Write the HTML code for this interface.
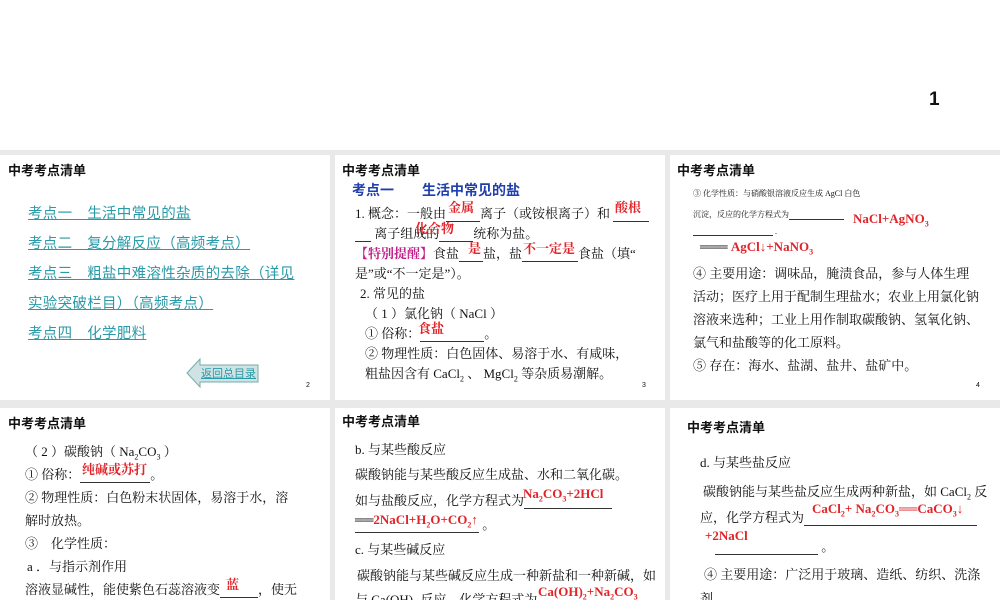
<!DOCTYPE html>
<html><head><meta charset="utf-8"><style>
*{margin:0;padding:0;box-sizing:border-box}
body{width:1000px;height:600px;overflow:hidden;background:#fff;position:relative;font-family:"Liberation Serif","Noto Serif CJK SC","Noto Sans CJK SC",serif;color:#111}
.bg{position:absolute;left:0;top:150px;width:1000px;height:450px;background:#e9e9e9}
.s{position:absolute;background:#fff;overflow:hidden}
.t{position:absolute;font-family:"Liberation Sans","Noto Sans CJK SC",sans-serif;font-weight:bold;font-size:13px;white-space:nowrap}
.p{position:absolute;font-size:13px;white-space:nowrap;font-family:"Liberation Serif","Noto Serif CJK SC",serif}
.r{color:#e0242a;font-weight:bold}
.u{display:inline-block;border-bottom:1px solid #333;vertical-align:bottom}
.lk{position:absolute;color:#2a9aa8;text-decoration:underline;font-size:14.5px;letter-spacing:0.3px;font-family:"Liberation Sans","Noto Sans CJK SC",sans-serif;white-space:nowrap}
.n{position:absolute;font-size:7px;font-family:"Liberation Sans",sans-serif}
sub{font-size:8px}
</style></head><body>
<div style="position:absolute;left:929px;top:89px;font:bold 19px 'Liberation Sans',sans-serif">1</div>
<div class="bg"></div>

<div class="s" style="left:0;top:155px;width:330px;height:245px">
<div class="t" style="left:8px;top:5px">中考考点清单</div>
<div class="lk" style="left:28px;top:47px">考点一　生活中常见的盐</div>
<div class="lk" style="left:28px;top:77px">考点二　复分解反应（高频考点）</div>
<div class="lk" style="left:28px;top:107px">考点三　粗盐中难溶性杂质的去除（详见</div>
<div class="lk" style="left:28px;top:137px">实验突破栏目）（高频考点）</div>
<div class="lk" style="left:28px;top:167px">考点四　化学肥料</div>
<svg style="position:absolute;left:186px;top:203px" width="74" height="30"><polygon points="1,15 14,1 14,7 72,7 72,24 14,24 14,29" fill="#cfe3e5" stroke="#7aa" stroke-width="1"/></svg>
<div class="lk" style="left:201px;top:210px;font-size:11px;letter-spacing:0">返回总目录</div>
<div class="n" style="left:306px;top:227px">2</div>
</div>

<div class="s" style="left:335px;top:155px;width:330px;height:245px">
<div class="t" style="left:7px;top:5px">中考考点清单</div>
<div class="p" style="left:17px;top:25px;color:#1f3fae;font-weight:bold;font-size:14px;font-family:'Liberation Sans','Noto Sans CJK SC',sans-serif">考点一　　生活中常见的盐</div>
<div class="p" style="left:20px;top:48px">1. 概念：一般由<span class="u" style="width:34px"></span>离子（或铵根离子）和 <span class="u" style="width:36px"></span></div>
<div class="p r" style="left:113px;top:42px">金属</div><div class="p r" style="left:280px;top:42px">酸根</div>
<div class="p" style="left:20px;top:68px"><span class="u" style="width:16px"></span> 离子组成的<span class="u" style="width:34px"></span>统称为盐。</div>
<div class="p r" style="left:80px;top:63px">化合物</div>
<div class="p" style="left:20px;top:88px"><span style="color:#c0208a;font-weight:bold">【特别提醒】</span>食盐<span class="u" style="width:24px"></span>盐，盐<span class="u" style="width:56px"></span>食盐（填“</div>
<div class="p r" style="left:133px;top:83px">是</div><div class="p r" style="left:188px;top:83px">不一定是</div>
<div class="p" style="left:20px;top:108px">是”或“不一定是”）。</div>
<div class="p" style="left:25px;top:128px">2. 常见的盐</div>
<div class="p" style="left:30px;top:148px">（ 1 ）氯化钠（ NaCl ）</div>
<div class="p" style="left:30px;top:168px">① 俗称：<span class="u" style="width:64px"></span>。</div>
<div class="p r" style="left:83px;top:163px">食盐</div>
<div class="p" style="left:30px;top:188px">② 物理性质：白色固体、易溶于水、有咸味，</div>
<div class="p" style="left:30px;top:208px">粗盐因含有 CaCl<sub>2</sub> 、 MgCl<sub>2</sub> 等杂质易潮解。</div>
<div class="n" style="left:307px;top:227px">3</div>
</div>

<div class="s" style="left:670px;top:155px;width:330px;height:245px">
<div class="t" style="left:7px;top:5px">中考考点清单</div>
<div class="p" style="left:23px;top:33px;font-size:8px">③ 化学性质：与硝酸银溶液反应生成 AgCl 白色</div>
<div class="p" style="left:23px;top:54px;font-size:8px">沉淀，反应的化学方程式为<span class="u" style="width:55px"></span></div>
<div class="p r" style="left:183px;top:56px;font-size:13px">NaCl+AgNO<sub>3</sub></div>
<div class="p" style="left:23px;top:72px;font-size:8px"><span class="u" style="width:80px"></span> .</div>
<div class="p" style="left:30px;top:84px;font-size:13px">═══ <span class="r">AgCl↓+NaNO<sub>3</sub></span></div>
<div class="p" style="left:23px;top:108px">④ 主要用途：调味品，腌渍食品，参与人体生理</div>
<div class="p" style="left:23px;top:131px">活动；医疗上用于配制生理盐水；农业上用氯化钠</div>
<div class="p" style="left:23px;top:154px">溶液来选种；工业上用作制取碳酸钠、氢氧化钠、</div>
<div class="p" style="left:23px;top:177px">氯气和盐酸等的化工原料。</div>
<div class="p" style="left:23px;top:200px">⑤ 存在：海水、盐湖、盐井、盐矿中。</div>
<div class="n" style="left:306px;top:227px">4</div>
</div>

<div class="s" style="left:0;top:408px;width:330px;height:192px">
<div class="t" style="left:8px;top:5px">中考考点清单</div>
<div class="p" style="left:25px;top:33px">（ 2 ）碳酸钠（ Na<sub>2</sub>CO<sub>3</sub> ）</div>
<div class="p" style="left:25px;top:56px">① 俗称：<span class="u" style="width:70px"></span>。</div>
<div class="p r" style="left:82px;top:51px">纯碱或苏打</div>
<div class="p" style="left:25px;top:79px">② 物理性质：白色粉末状固体，易溶于水，溶</div>
<div class="p" style="left:25px;top:102px">解时放热。</div>
<div class="p" style="left:25px;top:125px">③　化学性质：</div>
<div class="p" style="left:27px;top:148px">a ．与指示剂作用</div>
<div class="p" style="left:25px;top:171px">溶液显碱性，能使紫色石蕊溶液变<span class="u" style="width:38px"></span>，使无</div>
<div class="p r" style="left:226px;top:166px">蓝</div>
</div>

<div class="s" style="left:335px;top:408px;width:330px;height:192px">
<div class="t" style="left:7px;top:3px">中考考点清单</div>
<div class="p" style="left:20px;top:31px">b. 与某些酸反应</div>
<div class="p" style="left:20px;top:56px">碳酸钠能与某些酸反应生成盐、水和二氧化碳。</div>
<div class="p" style="left:20px;top:82px">如与盐酸反应，化学方程式为<span class="u" style="width:88px"></span></div>
<div class="p r" style="left:188px;top:78px">Na<sub>2</sub>CO<sub>3</sub>+2HCl</div>
<div class="p" style="left:20px;top:106px"><span class="u" style="width:124px"></span> 。</div>
<div class="p" style="left:20px;top:104px">══<span class="r">2NaCl+H<sub>2</sub>O+CO<sub>2</sub>↑</span></div>
<div class="p" style="left:20px;top:131px">c. 与某些碱反应</div>
<div class="p" style="left:22px;top:157px">碳酸钠能与某些碱反应生成一种新盐和一种新碱，如</div>
<div class="p" style="left:20px;top:181px">与 Ca(OH)<sub>2</sub> 反应，化学方程式为</div>
<div class="p r" style="left:203px;top:176px">Ca(OH)<sub>2</sub>+Na<sub>2</sub>CO<sub>3</sub></div>
</div>

<div class="s" style="left:670px;top:408px;width:330px;height:192px">
<div class="t" style="left:17px;top:9px">中考考点清单</div>
<div class="p" style="left:30px;top:44px">d. 与某些盐反应</div>
<div class="p" style="left:33px;top:73px">碳酸钠能与某些盐反应生成两种新盐，如 CaCl<sub>2</sub> 反</div>
<div class="p" style="left:30px;top:99px">应，化学方程式为<span class="u" style="width:173px"></span></div>
<div class="p r" style="left:142px;top:93px">CaCl<sub>2</sub>+ Na<sub>2</sub>CO<sub>3</sub>══CaCO<sub>3</sub>↓</div>
<div class="p r" style="left:35px;top:120px">+2NaCl</div>
<div class="p" style="left:45px;top:128px"><span class="u" style="width:103px"></span> 。</div>
<div class="p" style="left:34px;top:156px">④ 主要用途：广泛用于玻璃、造纸、纺织、洗涤</div>
<div class="p" style="left:30px;top:180px">剂</div>
</div>
</body></html>
